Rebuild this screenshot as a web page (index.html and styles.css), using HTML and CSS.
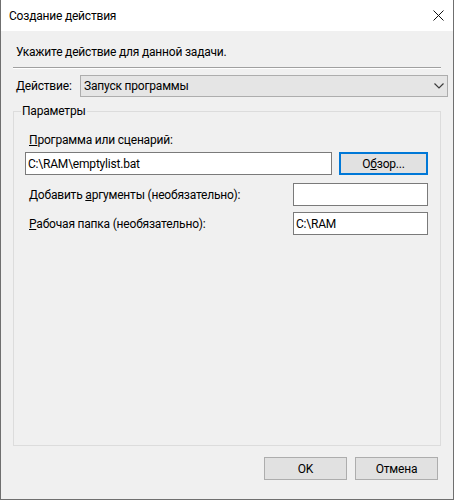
FILE: index.html
```html
<!DOCTYPE html>
<html lang="ru">
<head>
    <meta charset="UTF-8">
    <meta name="viewport" content="width=device-width, initial-scale=1.0">
    <title>Создание действия</title>
    <link rel="stylesheet" href="styles.css">
</head>
<body>
    <div class="dialog">
        <div class="titlebar">
            <span class="title">Создание действия</span>
            <button class="close" aria-label="Закрыть">
                <svg width="11" height="11" viewBox="0 0 11 11">
                    <path d="M0.5 0.5 L10.5 10.5 M10.5 0.5 L0.5 10.5" stroke="#111" stroke-width="1" fill="none"/>
                </svg>
            </button>
        </div>
        <div class="content">
            <p class="prompt">Укажите действие для данной задачи.</p>
            <div class="divider"></div>
            <div class="action-row">
                <label class="action-label"><u>Д</u>ействие:</label>
                <div class="combo">
                    <span>Запуск программы</span>
                    <svg class="chevron" width="10" height="6" viewBox="0 0 10 6">
                        <path d="M0.5 0.5 L5 5 L9.5 0.5" stroke="#3c3c3c" stroke-width="1.2" fill="none"/>
                    </svg>
                </div>
            </div>
            <fieldset class="group">
                <legend>Параметры</legend>
                <label class="field-label"><u>П</u>рограмма или сценарий:</label>
                <div class="program-row">
                    <input class="text-input program" type="text" value="C:\RAM\emptylist.bat">
                    <button class="btn browse">О<u>б</u>зор...</button>
                </div>
                <div class="field-row">
                    <label class="row-label">Добавить <u>а</u>ргументы (необязательно):</label>
                    <input class="text-input short" type="text" value="">
                </div>
                <div class="field-row">
                    <label class="row-label"><u>Р</u>абочая папка (необязательно):</label>
                    <input class="text-input short" type="text" value="C:\RAM">
                </div>
            </fieldset>
            <div class="footer">
                <button class="btn">OK</button>
                <button class="btn">Отмена</button>
            </div>
        </div>
    </div>
</body>
</html>
```

FILE: styles.css
```css
body {
    margin: 0;
    background-color: #f0f0f0;
    font-family: Roboto, "Noto Sans", sans-serif;
    font-size: 12px;
    letter-spacing: -0.2px;
    color: #000;
}

.dialog {
    width: 454px;
    height: 500px;
    box-sizing: border-box;
    border: 1px solid #6f6f6f;
    border-top: none;
    background-color: #f0f0f0;
    display: flex;
    flex-direction: column;
}

.titlebar {
    height: 31px;
    background-color: #fff;
    display: flex;
    align-items: center;
    justify-content: space-between;
    padding-left: 8px;
    padding-right: 9px;
}

.title {
    line-height: 16px;
}

.close {
    border: none;
    background: none;
    padding: 0;
    width: 11px;
    height: 11px;
    display: flex;
}

.content {
    flex: 1;
    display: flex;
    flex-direction: column;
    padding: 0 12px;
}

.prompt {
    margin: 13px 0 0 3px;
    line-height: 16px;
}

.divider {
    margin-top: 7px;
    border-top: 1px solid #a0a0a0;
    border-bottom: 1px solid #fff;
}

.action-row {
    display: flex;
    align-items: center;
    margin-top: 6px;
    margin-right: -7px;
}

.action-label {
    width: 64px;
    padding-left: 3px;
}

.combo {
    flex: 1;
    height: 22px;
    box-sizing: border-box;
    border: 1px solid #adadad;
    background-color: #e5e5e5;
    display: flex;
    align-items: center;
    justify-content: space-between;
    padding: 0 3px 0 3px;
}

.group {
    flex: 1;
    margin: 6px 0 0 0;
    padding: 13px 12px 0 15px;
    border: 1px solid #dcdcdc;
    min-width: 0;
}

.group legend {
    margin-left: -8px;
    padding: 0 1px;
    line-height: 16px;
}

.field-label {
    display: block;
    line-height: 16px;
}

.program-row {
    display: flex;
    margin-top: 4px;
    margin-left: -4px;
    gap: 7px;
}

.text-input {
    height: 23px;
    box-sizing: border-box;
    border: 1px solid #7a7a7a;
    background-color: #fff;
    font: inherit;
    letter-spacing: inherit;
    padding: 0 2px;
    outline: none;
}

.program {
    width: 307px;
}

.short {
    width: 135px;
}

.field-row {
    display: flex;
    align-items: center;
    justify-content: space-between;
    margin-top: 8px;
}

.field-row + .field-row {
    margin-top: 6px;
}

.btn {
    height: 23px;
    box-sizing: border-box;
    border: 1px solid #adadad;
    background-color: #e1e1e1;
    font: inherit;
    letter-spacing: inherit;
    color: #000;
    padding: 0;
}

.browse {
    width: 89px;
    border: 2px solid #0078d7;
}

.footer {
    display: flex;
    justify-content: flex-end;
    gap: 8px;
    padding: 11px 3px 19px 0;
}

.footer .btn {
    width: 83px;
}
```
